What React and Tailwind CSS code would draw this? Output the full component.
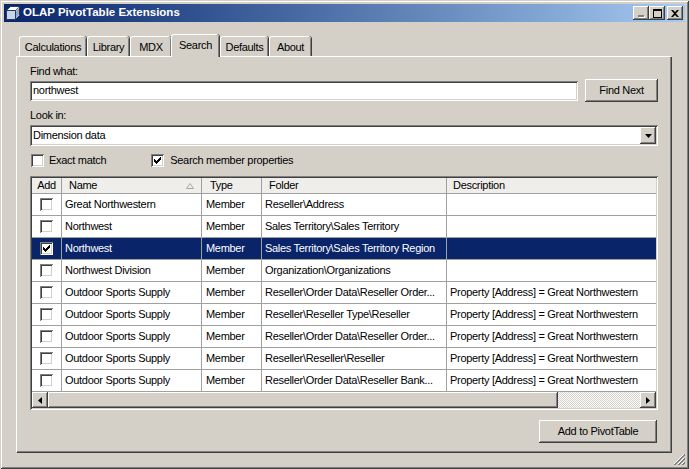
import React from 'react'

const raised = 'shadow-[inset_-1px_-1px_#404040,inset_1px_1px_#ffffff,inset_-2px_-2px_#808080,inset_2px_2px_#d4d0c8]'
const sunken = 'shadow-[inset_1px_1px_#808080,inset_-1px_-1px_#ffffff,inset_2px_2px_#404040,inset_-2px_-2px_#d4d0c8]'

const rows = [
  { name: 'Great Northwestern', folder: 'Reseller\\Address', desc: '' },
  { name: 'Northwest', folder: 'Sales Territory\\Sales Territory', desc: '' },
  { name: 'Northwest', folder: 'Sales Territory\\Sales Territory Region', desc: '', selected: true },
  { name: 'Northwest Division', folder: 'Organization\\Organizations', desc: '' },
  { name: 'Outdoor Sports Supply', folder: 'Reseller\\Order Data\\Reseller Order...', desc: 'Property [Address] = Great Northwestern' },
  { name: 'Outdoor Sports Supply', folder: 'Reseller\\Reseller Type\\Reseller', desc: 'Property [Address] = Great Northwestern' },
  { name: 'Outdoor Sports Supply', folder: 'Reseller\\Order Data\\Reseller Order...', desc: 'Property [Address] = Great Northwestern' },
  { name: 'Outdoor Sports Supply', folder: 'Reseller\\Reseller\\Reseller', desc: 'Property [Address] = Great Northwestern' },
  { name: 'Outdoor Sports Supply', folder: 'Reseller\\Order Data\\Reseller Bank...', desc: 'Property [Address] = Great Northwestern' },
]

const tabs = [
  { label: 'Calculations', cls: 'ml-[3px] w-[67px]' },
  { label: 'Library', cls: 'ml-[1px] w-[42px]' },
  { label: 'MDX', cls: 'ml-[1px] w-[41px]' },
  { label: 'Search', cls: 'w-[48px]', active: true },
  { label: 'Defaults', cls: 'ml-[1px] w-[48px]' },
  { label: 'About', cls: 'ml-[1px] w-[42px]' },
]

function CheckBox({ checked }) {
  return (
    <span className={`w-[13px] h-[13px] bg-white flex items-center justify-center shrink-0 ${sunken}`}>
      {checked && (
        <svg width="7" height="7" viewBox="0 0 7 7">
          <path d="M0 2h1v1h1v1h1v-1h1v-1h1v-1h1v-1h1v3h-1v1h-1v1h-1v1h-1v1h-1v-1h-1v-1h-1z" fill="#000" />
        </svg>
      )}
    </span>
  )
}

function Arrow({ dir }) {
  const d = dir === 'left' ? 'M4 0v7L0 3.5z' : dir === 'right' ? 'M0 0v7l4-3.5z' : 'M0 0h7L3.5 4z'
  const w = dir === 'down' ? 7 : 4
  const h = dir === 'down' ? 4 : 7
  return (
    <svg width={w} height={h} viewBox={`0 0 ${w} ${h}`}>
      <path d={d} fill="#000" />
    </svg>
  )
}

function CubeIcon() {
  return (
    <svg width="16" height="16" viewBox="0 0 16 16">
      <path d="M1.5 5.5L5.5 1.5H14.5V10.5L10.5 14.5H1.5Z" fill="#dfe9f5" stroke="#2a3a55" />
      <path d="M1.5 5.5H10.5V14.5" fill="none" stroke="#2a3a55" />
      <path d="M10.5 5.5L14.5 1.5" stroke="#2a3a55" />
      <path d="M2 6h8v8H2z" fill="#c4d6ee" />
      <path d="M11 6l3-3v7l-3 3z" fill="#8fa8cc" />
      <path d="M2.5 5L6 2h8l-3.5 3z" fill="#ffffff" />
    </svg>
  )
}

export default function App() {
  return (
    <div
      className="relative w-[689px] h-[469px] bg-[#d4d0c8] p-[4px] text-[11px] tracking-[-0.3px] text-black shadow-[inset_1px_1px_#d4d0c8,inset_-1px_-1px_#404040,inset_2px_2px_#ffffff,inset_-2px_-2px_#808080] overflow-hidden"
      style={{ fontFamily: '"Liberation Sans", Arial, sans-serif' }}
    >
      {/* title bar */}
      <div className="h-[18px] flex items-center bg-gradient-to-r from-[#0a246a] to-[#a6caf0]">
        <span className="ml-[1px]">
          <CubeIcon />
        </span>
        <span className="ml-[2px] text-white font-bold text-[11.5px] tracking-normal leading-none">OLAP PivotTable Extensions</span>
        <div className="ml-auto flex items-center mr-[2px]">
          <span className={`w-[16px] h-[14px] bg-[#d4d0c8] flex items-end justify-center pb-[3px] ${raised}`}>
            <span className="w-[6px] h-[2px] bg-[#808080] shadow-[1px_1px_#ffffff]" />
          </span>
          <span className={`w-[16px] h-[14px] bg-[#d4d0c8] flex items-center justify-center ${raised}`}>
            <span className="w-[9px] h-[9px] border border-black border-t-2" />
          </span>
          <span className={`ml-[2px] w-[16px] h-[14px] bg-[#d4d0c8] flex items-center justify-center ${raised}`}>
            <svg width="8" height="7" viewBox="0 0 8 7">
              <path d="M0 0h2l2 2 2-2h2L5 3.5 8 7H6L4 5 2 7H0l3-3.5z" fill="#000" />
            </svg>
          </span>
        </div>
      </div>

      {/* tabs */}
      <div className="mt-[12px] ml-[12px] mr-[14px]">
        <div className="h-[22px] flex items-end">
          {tabs.map((t) => (
            <div
              key={t.label}
              className={
                t.active
                  ? `${t.cls} relative z-10 h-[23px] -mb-px bg-[#d4d0c8] border-l border-t border-white rounded-t-[3px] shadow-[inset_-1px_0_#808080,1px_0_#404040] flex items-start justify-center pt-[4px]`
                  : `${t.cls} h-[20px] bg-[#d4d0c8] border-l border-t border-white rounded-t-[3px] shadow-[inset_-1px_0_#808080,1px_0_#404040] flex items-start justify-center pt-[4px]`
              }
            >
              <span className="leading-[13px] whitespace-nowrap">{t.label}</span>
            </div>
          ))}
        </div>

        {/* tab panel */}
        <div className="h-[396px] border-l border-t border-white shadow-[inset_-1px_-1px_#808080,1px_1px_#404040] pl-[13px] pr-[13px] pt-[8px] flex flex-col">
          <div className="h-[13px] leading-[13px]">Find what:</div>
          <div className="mt-[1px] h-[23px] flex items-center">
            <div className={`w-[548px] h-[20px] bg-white flex items-center px-[3px] ${sunken}`}>northwest</div>
            <div className={`ml-auto w-[73px] h-[23px] flex items-center justify-center ${raised}`}>Find Next</div>
          </div>

          <div className="mt-[7px] h-[13px] leading-[13px]">Look in:</div>
          <div className={`mt-[3px] h-[21px] bg-white flex items-center pl-[3px] pr-[2px] ${sunken}`}>
            <span>Dimension data</span>
            <span className={`ml-auto w-[16px] h-[17px] bg-[#d4d0c8] flex items-center justify-center ${raised}`}>
              <Arrow dir="down" />
            </span>
          </div>

          <div className="mt-[8px] h-[13px] flex items-center">
            <span className="ml-[1px]">
              <CheckBox />
            </span>
            <span className="ml-[5px]">Exact match</span>
            <span className="ml-[45px]">
              <CheckBox checked />
            </span>
            <span className="ml-[6px]">Search member properties</span>
          </div>

          {/* grid */}
          <div className={`mt-[9px] h-[234px] p-[2px] flex flex-col ${sunken}`}>
            <div className="h-[16px] flex bg-[#efeeea] border-b border-[#a0a0a0] shrink-0">
              <div className="w-[30px] border-r border-[#a0a0a0] flex items-center justify-center">Add</div>
              <div className="w-[140px] border-r border-[#a0a0a0] flex items-center pl-[7px]">
                <span>Name</span>
                <svg className="ml-auto mr-[7px]" width="8" height="6" viewBox="0 0 8 6">
                  <path d="M4 0.5L7.5 5.5H0.5Z" fill="none" stroke="#a8a8a8" />
                </svg>
              </div>
              <div className="w-[60px] border-r border-[#a0a0a0] flex items-center pl-[8px]">Type</div>
              <div className="w-[185px] border-r border-[#a0a0a0] flex items-center pl-[7px]">Folder</div>
              <div className="flex-1 flex items-center pl-[6px]">Description</div>
            </div>

            {rows.map((r, i) => (
              <div
                key={i}
                className={
                  r.selected
                    ? 'h-[22px] flex border-b border-[#a0a0a0] bg-[#0a246a] text-white shrink-0'
                    : 'h-[22px] flex border-b border-[#a0a0a0] bg-white shrink-0'
                }
              >
                <div className="w-[30px] border-r border-[#a0a0a0] flex items-center justify-center">
                  <CheckBox checked={r.selected} />
                </div>
                <div className="w-[140px] border-r border-[#a0a0a0] flex items-center pl-[3px] whitespace-nowrap overflow-hidden">{r.name}</div>
                <div className="w-[60px] border-r border-[#a0a0a0] flex items-center pl-[4px] whitespace-nowrap overflow-hidden">Member</div>
                <div className="w-[185px] border-r border-[#a0a0a0] flex items-center pl-[3px] whitespace-nowrap overflow-hidden">{r.folder}</div>
                <div className="flex-1 flex items-center pl-[3px] whitespace-nowrap overflow-hidden">{r.desc}</div>
              </div>
            ))}

            {/* horizontal scrollbar */}
            <div className="h-[16px] flex shrink-0">
              <span className={`w-[16px] h-[16px] bg-[#d4d0c8] flex items-center justify-center ${raised}`}>
                <Arrow dir="left" />
              </span>
              <span className={`w-[510px] h-[16px] bg-[#d4d0c8] ${raised}`} />
              <span className="flex-1 h-[16px] bg-[repeating-conic-gradient(#ffffff_0%_25%,#d4d0c8_0%_50%)] bg-[length:2px_2px]" />
              <span className={`w-[16px] h-[16px] bg-[#d4d0c8] flex items-center justify-center ${raised}`}>
                <Arrow dir="right" />
              </span>
            </div>
          </div>

          <div className="mt-[10px] flex justify-end pr-[1px]">
            <div className={`w-[118px] h-[23px] flex items-center justify-center ${raised}`}>Add to PivotTable</div>
          </div>
        </div>
      </div>

      {/* size grip */}
      <svg className="absolute right-[4px] bottom-[4px]" width="12" height="12" viewBox="0 0 12 12">
        <path d="M11 1L1 11M11 5L5 11M11 9L9 11" stroke="#ffffff" strokeWidth="1" />
        <path d="M12 1L1 12M12 2L2 12M12 5L5 12M12 6L6 12M12 9L9 12M12 10L10 12" stroke="#808080" strokeWidth="1" />
      </svg>
    </div>
  )
}
